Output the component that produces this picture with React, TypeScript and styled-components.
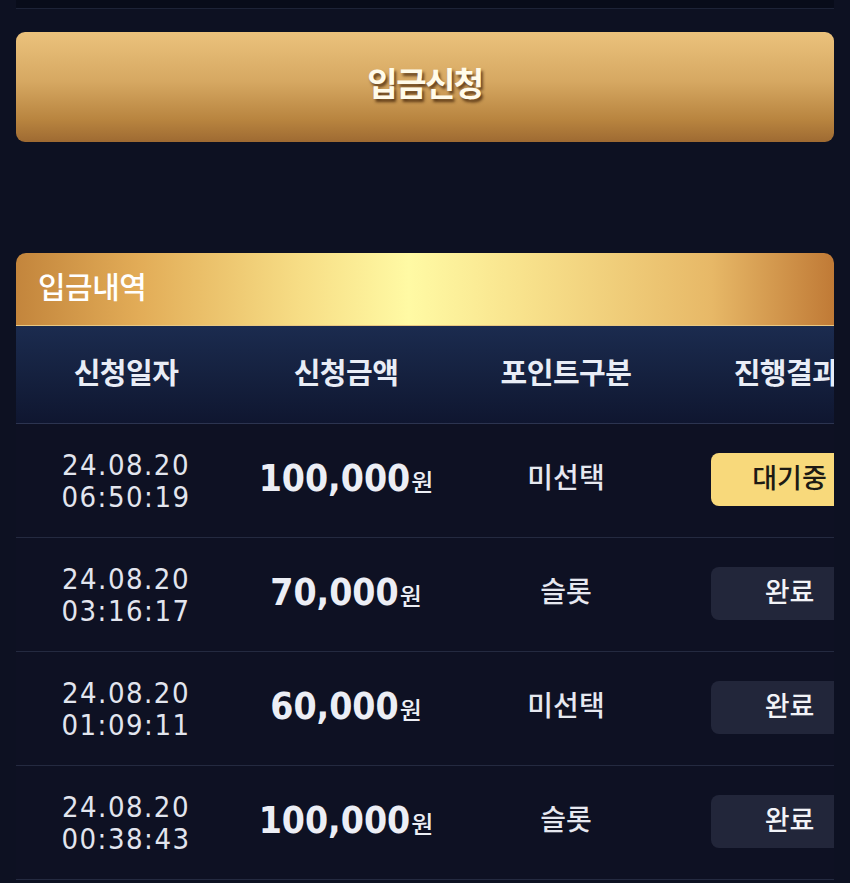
import React from 'react';
import styled, { createGlobalStyle } from 'styled-components';

const GlobalStyle = createGlobalStyle`
  html, body {
    margin: 0;
    padding: 0;
    background: #0d1122;
  }
  body {
    font-family: 'Noto Sans CJK KR', 'Noto Sans', sans-serif;
    color: #e6e9f2;
  }
`;

const Page = styled.div`
  width: 850px;
  padding: 0 16px;
  box-sizing: border-box;
`;

const TopEdge = styled.div`
  height: 8px;
  background: #080c1a;
  border-bottom: 1px solid #1d2337;
`;

const SubmitButton = styled.button`
  display: flex;
  align-items: center;
  justify-content: center;
  width: 100%;
  height: 110px;
  margin-top: 23px;
  padding: 0 0 10px;
  border: none;
  border-radius: 9px;
  background: linear-gradient(180deg, #ebc27c 0%, #d6a862 45%, #b8843f 80%, #9e6a32 100%);
  font-family: 'Noto Sans CJK KR', sans-serif;
  font-size: 33px;
  font-weight: 700;
  letter-spacing: -1.5px;
  color: #fffbea;
  text-shadow: 2px 3px 3px rgba(60, 30, 5, 0.75);
  cursor: pointer;
`;

const Panel = styled.section`
  margin-top: 111px;
  border-radius: 10px 10px 0 0;
  overflow: hidden;
`;

const PanelTitle = styled.div`
  height: 72px;
  display: flex;
  align-items: center;
  padding: 0 0 9px 22px;
  box-sizing: border-box;
  background: linear-gradient(
    90deg,
    #c3853c 0%,
    #e2ac57 15%,
    #f7de86 35%,
    #fffaa4 48%,
    #f8e28c 62%,
    #e7b867 85%,
    #c07a36 100%
  );
  font-size: 30px;
  font-weight: 500;
  letter-spacing: -0.5px;
  color: #ffffff;
`;

const Table = styled.div`
  width: 882px;
`;

const HeadRow = styled.div`
  display: grid;
  grid-template-columns: repeat(4, 220px);
  height: 97px;
  align-items: center;
  background: linear-gradient(180deg, #1b2b4f 0%, #15213f 50%, #0f1630 100%);
  border-top: 1px solid #e9c883;
  border-bottom: 1px solid #2c3450;
`;

const HeadCell = styled.div`
  padding-bottom: 8px;
  text-align: center;
  font-size: 29px;
  font-weight: 700;
  letter-spacing: -0.5px;
  color: #e9edf6;
`;

const Row = styled.div`
  display: grid;
  grid-template-columns: repeat(4, 220px);
  height: 113px;
  align-items: center;
  border-bottom: 1px solid #242a40;
  background: #0e1123;
`;

const Cell = styled.div`
  display: flex;
  flex-direction: column;
  align-items: center;
  justify-content: center;
`;

const DateText = styled.div`
  font-family: 'DejaVu Sans Condensed', 'DejaVu Sans', sans-serif;
  font-size: 29px;
  line-height: 32px;
  letter-spacing: 1.5px;
  color: #e2e5ee;
`;

const Amount = styled.div`
  display: flex;
  align-items: baseline;
  padding-bottom: 5px;
  font-family: 'DejaVu Sans Condensed', 'DejaVu Sans', sans-serif;
  font-size: 37px;
  font-weight: 700;
  color: #eceef5;
  span {
    font-family: 'Noto Sans CJK KR', sans-serif;
    font-size: 24px;
    font-weight: 500;
    margin-left: 1px;
  }
`;

const PointText = styled.div`
  padding-bottom: 9px;
  font-size: 28px;
  font-weight: 500;
  color: #e6e8f0;
`;

const Badge = styled.div<{ $pending?: boolean }>`
  width: 150px;
  height: 53px;
  margin: 0 0 2px 35px;
  display: flex;
  align-items: center;
  justify-content: center;
  padding: 0 0 7px 7px;
  box-sizing: border-box;
  border-radius: 8px;
  align-self: flex-start;
  background: ${(p) => (p.$pending ? '#f8d97b' : '#22263a')};
  color: ${(p) => (p.$pending ? '#1d1a14' : '#f2f3f7')};
  font-size: 27px;
  font-weight: 500;
`;

const rows = [
  { date: '24.08.20', time: '06:50:19', amount: '100,000', point: '미선택', pending: true },
  { date: '24.08.20', time: '03:16:17', amount: '70,000', point: '슬롯', pending: false },
  { date: '24.08.20', time: '01:09:11', amount: '60,000', point: '미선택', pending: false },
  { date: '24.08.20', time: '00:38:43', amount: '100,000', point: '슬롯', pending: false },
];

function App() {
  return (
    <Page>
      <GlobalStyle />
      <TopEdge />
      <SubmitButton>입금신청</SubmitButton>
      <Panel>
        <PanelTitle>입금내역</PanelTitle>
        <Table>
          <HeadRow>
            <HeadCell>신청일자</HeadCell>
            <HeadCell>신청금액</HeadCell>
            <HeadCell>포인트구분</HeadCell>
            <HeadCell>진행결과</HeadCell>
          </HeadRow>
          {rows.map((r, i) => (
            <Row key={i}>
              <Cell>
                <DateText>{r.date}</DateText>
                <DateText>{r.time}</DateText>
              </Cell>
              <Cell>
                <Amount>
                  {r.amount}
                  <span>원</span>
                </Amount>
              </Cell>
              <Cell>
                <PointText>{r.point}</PointText>
              </Cell>
              <Cell>
                <Badge $pending={r.pending}>{r.pending ? '대기중' : '완료'}</Badge>
              </Cell>
            </Row>
          ))}
        </Table>
      </Panel>
    </Page>
  );
}

export default App;
